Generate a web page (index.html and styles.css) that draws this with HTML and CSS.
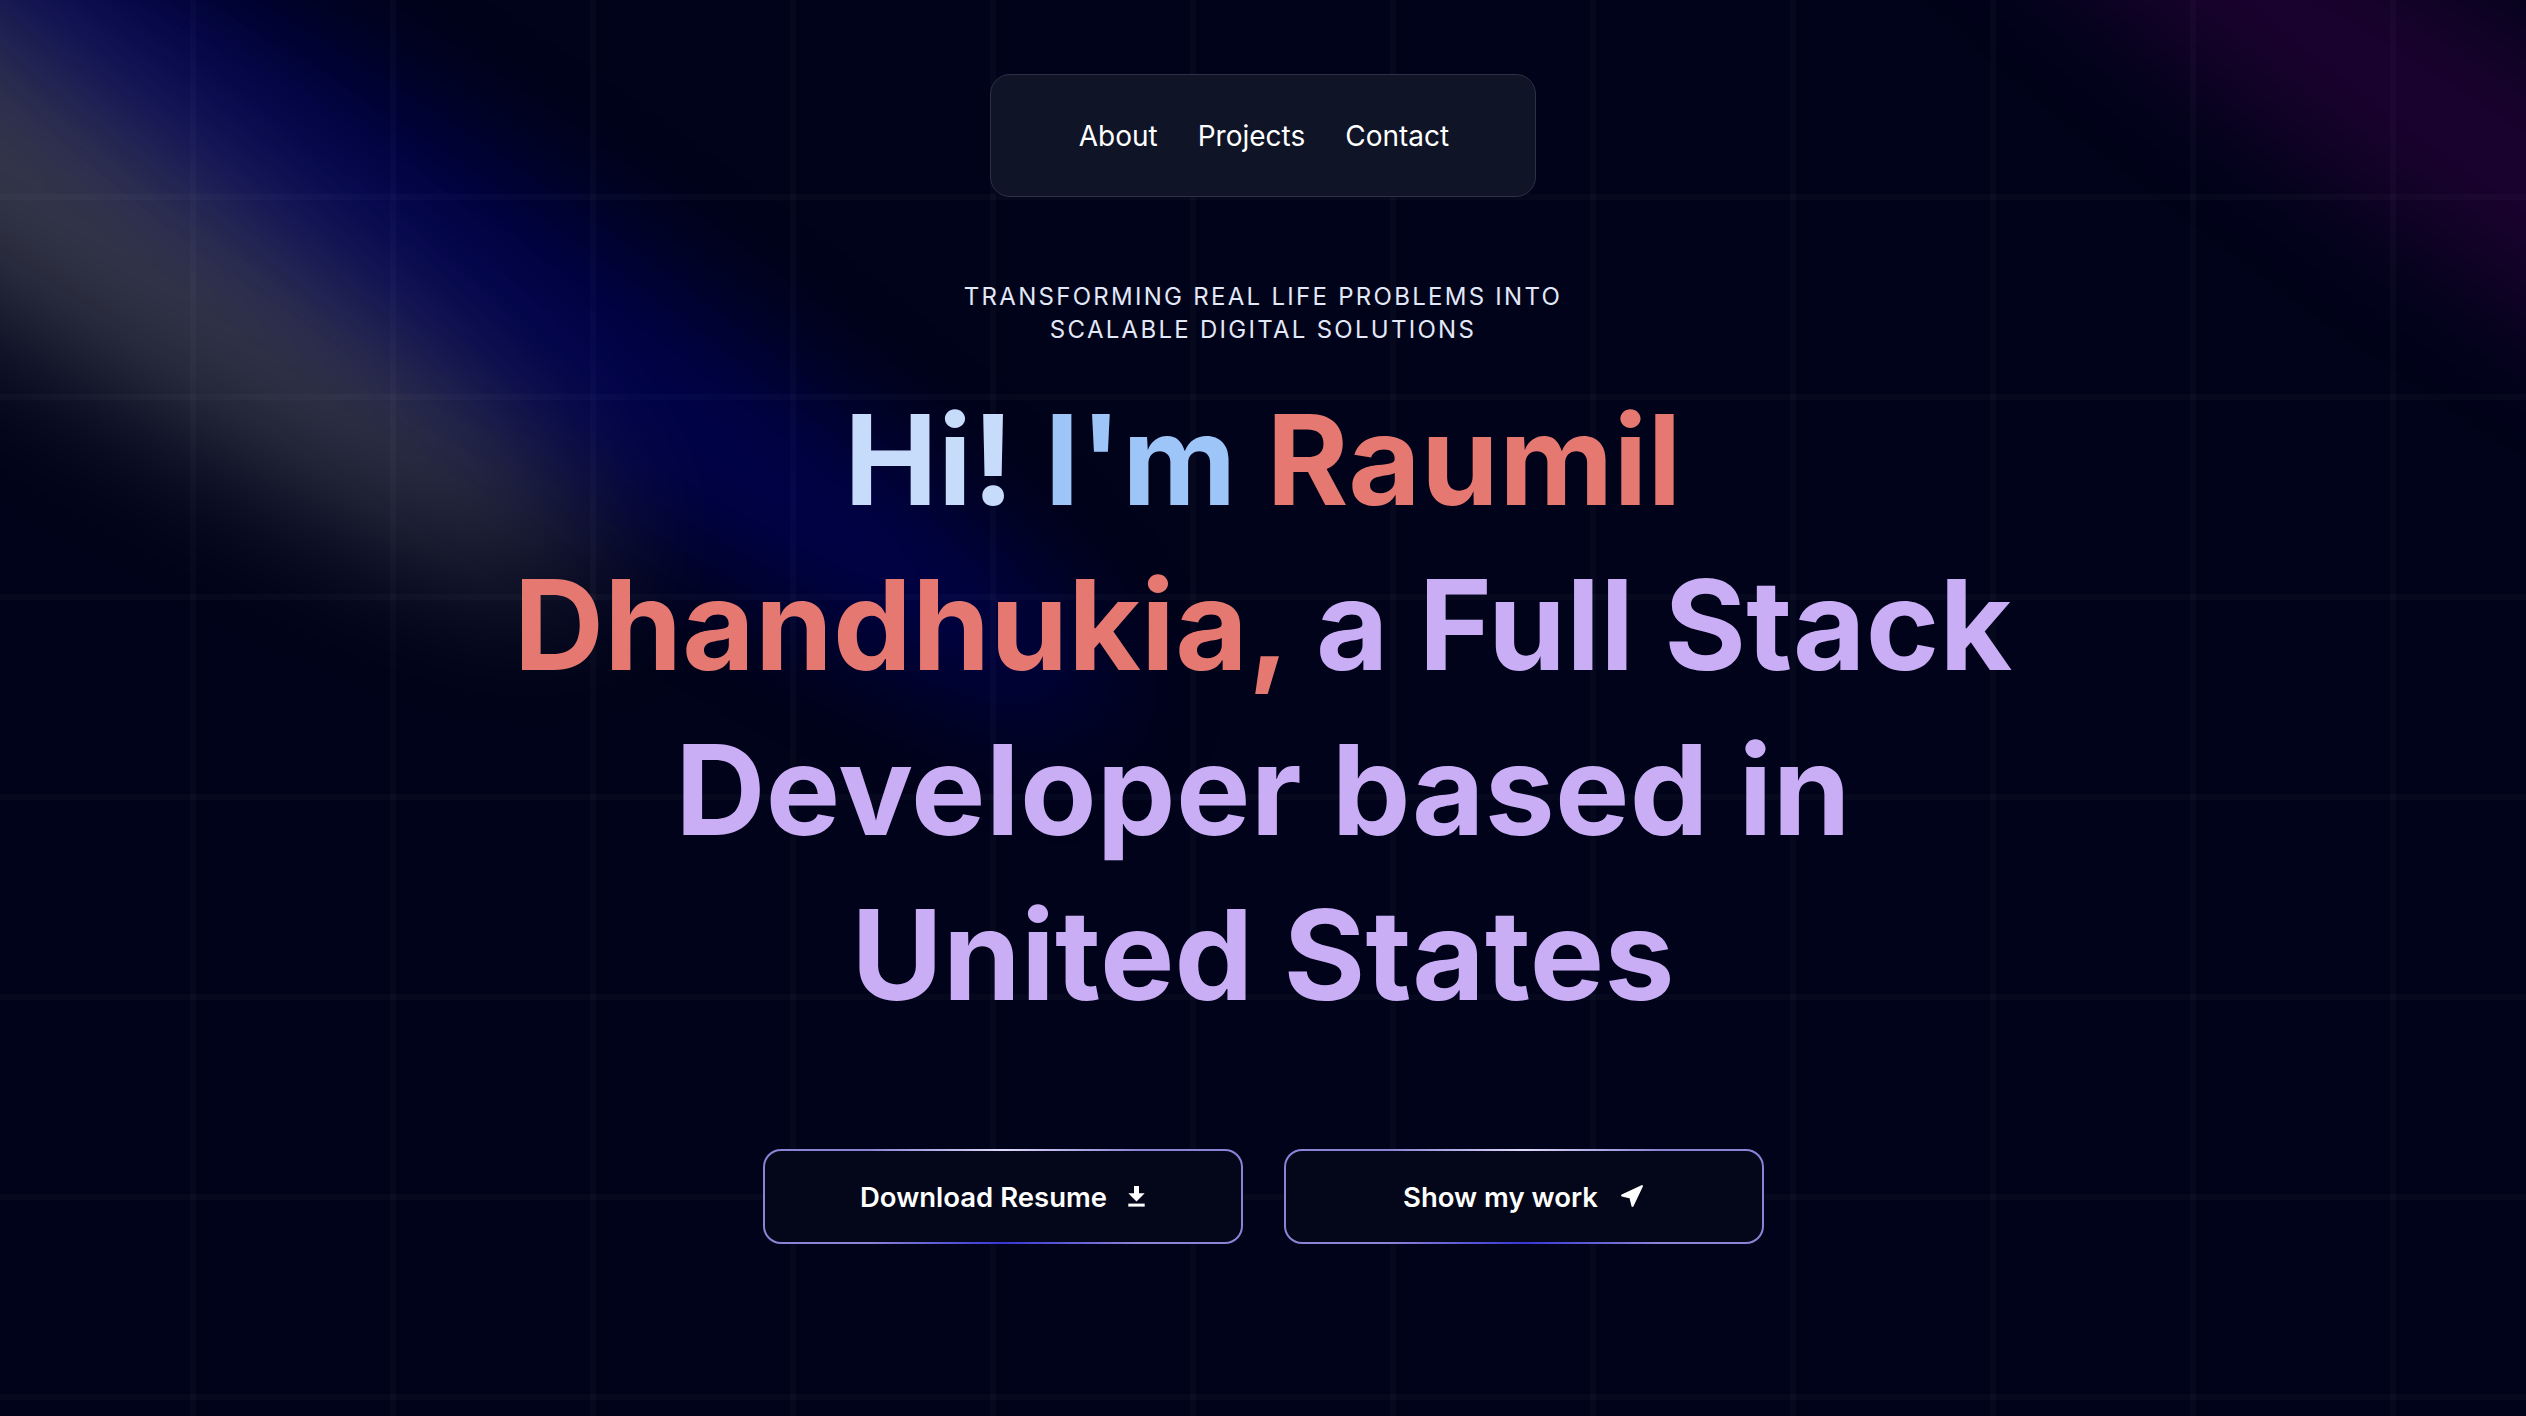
FILE: index.html
```html
<!DOCTYPE html>
<html lang="en">
<head>
<meta charset="utf-8">
<title>Raumil Dhandhukia</title>
<link rel="stylesheet" href="styles.css">
</head>
<body>
<main class="hero">
  <div class="grid-bg"></div>
  <svg class="spot spot-white" viewBox="0 0 3787 2842" fill="none" aria-hidden="true">
    <defs><filter id="blurW" x="0.86" y="0.84" width="3785.16" height="2840.26" filterUnits="userSpaceOnUse" color-interpolation-filters="sRGB"><feGaussianBlur stdDeviation="151"/></filter></defs>
    <g filter="url(#blurW)"><ellipse cx="1924.71" cy="273.501" rx="1924.71" ry="273.501" transform="matrix(-0.822377 -0.568943 -0.568943 0.822377 3631.88 2291.09)" fill="white" fill-opacity="0.21"/></g>
  </svg>
  <svg class="spot spot-blue" viewBox="0 0 3787 2842" fill="none" aria-hidden="true">
    <defs><filter id="blurB" x="0.86" y="0.84" width="3785.16" height="2840.26" filterUnits="userSpaceOnUse" color-interpolation-filters="sRGB"><feGaussianBlur stdDeviation="151"/></filter></defs>
    <g filter="url(#blurB)"><ellipse cx="1924.71" cy="273.501" rx="1924.71" ry="273.501" transform="matrix(-0.822377 -0.568943 -0.568943 0.822377 3631.88 2291.09)" fill="blue" fill-opacity="0.21"/></g>
  </svg>
  <svg class="spot spot-purple" viewBox="0 0 3787 2842" fill="none" aria-hidden="true">
    <defs><filter id="blurP" x="0.86" y="0.84" width="3785.16" height="2840.26" filterUnits="userSpaceOnUse" color-interpolation-filters="sRGB"><feGaussianBlur stdDeviation="151"/></filter></defs>
    <g filter="url(#blurP)"><ellipse cx="1924.71" cy="273.501" rx="1924.71" ry="273.501" transform="matrix(-0.822377 -0.568943 -0.568943 0.822377 3631.88 2291.09)" fill="purple" fill-opacity="0.21"/></g>
  </svg>

  <div class="content">
    <nav class="nav">
      <a class="nav-link" href="#about">About</a>
      <a class="nav-link" href="#projects">Projects</a>
      <a class="nav-link" href="#contact">Contact</a>
    </nav>

    <p class="tagline">Transforming real life problems into scalable digital solutions</p>

    <h1 class="title"><span class="c-hi">Hi!</span> <span class="c-im">I'm</span> <span class="c-name">Raumil Dhandhukia,</span> <span class="c-rest">a Full Stack Developer based in United States</span></h1>

    <div class="actions">
      <a class="btn" href="#resume">
        <span>Download Resume</span>
        <svg class="icon-dl" viewBox="0 0 17 21" aria-hidden="true">
          <rect x="6" y="0" width="5" height="8" fill="#fff"/>
          <polygon points="0.3,7.3 16.7,7.3 8.5,15.4" fill="#fff"/>
          <rect x="0.3" y="17.6" width="16.4" height="3" fill="#fff"/>
        </svg>
      </a>
      <a class="btn" href="#projects">
        <span>Show my work</span>
        <svg class="icon-nav" viewBox="0 0 24 24" aria-hidden="true">
          <polygon points="3 11 22 2 13 21 11 13 3 11" fill="#fff" stroke="#fff" stroke-width="2" stroke-linejoin="round"/>
        </svg>
      </a>
    </div>
  </div>
</main>
</body>
</html>
```
FILE: styles.css
```css
* { box-sizing: border-box; }

html, body {
  margin: 0;
  padding: 0;
  background: #000319;
}

body {
  font-family: Inter, "Noto Sans", "Liberation Sans", sans-serif;
  color: #fff;
}

.hero {
  position: relative;
  width: 100%;
  height: 1416px;
  overflow: hidden;
  background: #000319;
}

.grid-bg {
  position: absolute;
  inset: 0;
  background-image:
    linear-gradient(to right, transparent 190px, rgba(255,255,255,0.022) 190px, rgba(255,255,255,0.022) 196px, transparent 196px),
    linear-gradient(to bottom, transparent 194px, rgba(255,255,255,0.022) 194px, rgba(255,255,255,0.022) 200px, transparent 200px);
  background-size: 200px 200px;
}

.spot {
  position: absolute;
  pointer-events: none;
  z-index: 1;
}
.spot-white { left: -1253px; top: -686px; width: 2122px; height: 1416px; }
.spot-blue { left: -581px; top: -285px; width: 2122px; height: 1133px; }
.spot-purple { left: 1465px; top: -393px; width: 2122px; height: 1133px; }

.content {
  position: relative;
  z-index: 10;
  display: flex;
  flex-direction: column;
  align-items: center;
  padding-top: 74px;
}

.nav {
  display: flex;
  align-items: center;
  gap: 40px;
  height: 123px;
  padding: 0 86px 0 88px;
  background: #0f1427;
  border: 1.5px solid #2c3144;
  border-radius: 20px;
}

.nav-link {
  color: #fff;
  text-decoration: none;
  font-size: 28px;
  font-weight: 400;
}

.tagline {
  margin: 83px 0 0;
  max-width: 660px;
  text-align: center;
  text-transform: uppercase;
  font-size: 24px;
  line-height: 33px;
  letter-spacing: 0.095em;
  color: #e2e8f8;
}

.title {
  margin: 31px 0 0;
  max-width: 1540px;
  text-align: center;
  font-size: 125px;
  line-height: 165px;
  font-weight: 700;
  letter-spacing: 0.002em;
}

.c-hi { color: #c7dbfb; }
.c-im { color: #9ec5f8; }
.c-name { color: #e57870; }
.c-rest { color: #c9adf5; }

.actions {
  display: flex;
  gap: 41px;
  margin-top: 112px;
}

.btn {
  display: flex;
  align-items: center;
  justify-content: center;
  gap: 21px;
  width: 480px;
  height: 95px;
  border: 2px solid transparent;
  border-radius: 18px;
  color: #fff;
  text-decoration: none;
  font-size: 27.5px;
  font-weight: 600;
  background:
    linear-gradient(#04061a, #04061a) padding-box,
    linear-gradient(90deg, rgba(232,226,255,0) 22%, rgba(232,226,255,0.9) 50%, rgba(232,226,255,0) 78%) top / 100% 50% no-repeat border-box,
    linear-gradient(90deg, rgba(55,55,215,0) 22%, rgba(55,55,215,1) 50%, rgba(55,55,215,0) 78%) bottom / 100% 50% no-repeat border-box,
    linear-gradient(#8b84d6, #8b84d6) border-box;
}

.icon-dl { width: 17px; height: 21px; }
.icon-nav { width: 25px; height: 25px; }
```
